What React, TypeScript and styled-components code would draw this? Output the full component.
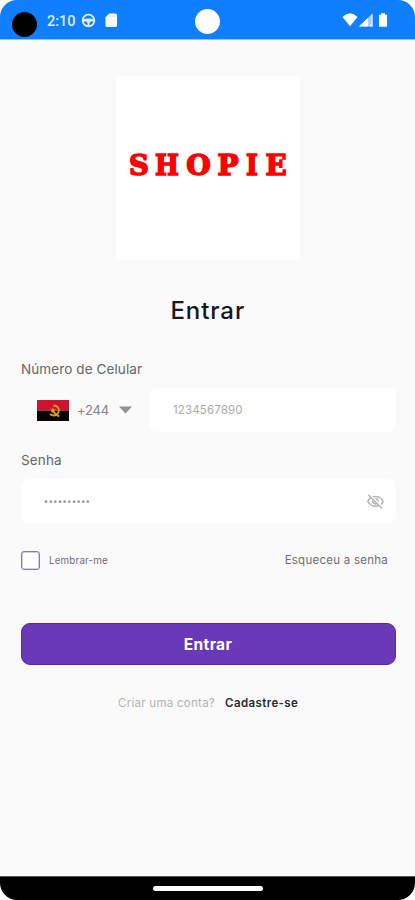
import React from "react";
import styled, { createGlobalStyle } from "styled-components";

const GlobalStyle = createGlobalStyle`
  *, *::before, *::after { box-sizing: border-box; }
  body { margin: 0; background: #fff; font-family: Inter, Roboto, sans-serif; }
  button, input { font-family: inherit; }
`;

const Phone = styled.div`
  width: 415px;
  height: 900px;
  display: flex;
  flex-direction: column;
  overflow: hidden;
  border-radius: 17px;
  background: #fafafa;
`;

const StatusBar = styled.header`
  height: 40px;
  flex: none;
  display: grid;
  grid-template-columns: 1fr 25px 1fr;
  background: #107fff;
  border-bottom: 1px solid #8ec3ff;
`;

const StatusLeft = styled.div`
  display: flex;
  align-items: flex-start;
  padding-left: 12px;
`;

const StatusRight = styled.div`
  display: flex;
  justify-content: flex-end;
  padding: 13px 27px 0 0;
`;

const Dot = styled.span<{ $color: string; $top: number }>`
  flex: none;
  width: 25px;
  height: 25px;
  margin-top: ${(p) => p.$top}px;
  border-radius: 50%;
  background: ${(p) => p.$color};
`;

const Clock = styled.time`
  margin: 12px 6px 0 10px;
  color: #dcecff;
  font-family: Roboto, sans-serif;
  font-size: 14.5px;
  font-weight: 500;
  line-height: 19px;
  width: 28px;
  white-space: nowrap;
`;

const StatusGlyph = styled.svg<{ $left?: number }>`
  flex: none;
  display: block;
  margin: 13px 0 0 ${(p) => p.$left ?? 0}px;
`;

const SignalGlyphs = styled.svg`
  display: block;
`;

const Screen = styled.main`
  flex: 1;
  display: flex;
  flex-direction: column;
  padding: 36px 19px 0 21px;
`;

const LogoCard = styled.div`
  width: 184px;
  height: 184px;
  margin-left: 95px;
  padding: 71px 0 0 12px;
  border-radius: 3px;
  background: #fff;
`;

const Wordmark = styled.div`
  display: grid;
  grid-template-columns: 21px 35px 29px 30px 18px 29px;
  height: 36px;
  color: #fe0000;
  font: bold 28px/38px "DejaVu Serif", "Liberation Serif", serif;
`;

const Letter = styled.span<{ $stretch: number }>`
  justify-self: center;
  width: 0;
  display: flex;
  justify-content: center;
  transform: scaleX(${(p) => p.$stretch});
  -webkit-text-stroke: 1.6px #fe0000;
`;

const Title = styled.h1`
  margin: 35px 0 0 149.5px;
  color: #171719;
  font-size: 24px;
  font-weight: 500;
  line-height: 32px;
  letter-spacing: 0.9px;
`;

const Label = styled.label<{ $top: number; $spacing: number }>`
  margin-top: ${(p) => p.$top}px;
  color: #666;
  font-size: 13.5px;
  line-height: 18px;
  letter-spacing: ${(p) => p.$spacing}px;
`;

const PhoneRow = styled.div`
  display: flex;
  height: 44px;
  margin-top: 10px;
`;

const CountryPicker = styled.button`
  width: 129px;
  display: flex;
  align-items: center;
  padding: 0 0 0 16px;
  border: 0;
  background: transparent;
  color: #858585;
  font-size: 13px;
`;

const Flag = styled.svg`
  flex: none;
  margin-right: 8px;
`;

const Prefix = styled.span`
  width: 42px;
  text-align: left;
  letter-spacing: -0.2px;
`;

const Field = styled.div`
  flex: 1;
  display: flex;
  align-items: center;
  min-width: 0;
  padding: 0 12px 0 23px;
  border-radius: 8px;
  background: #fff;
`;

const PasswordField = styled(Field)`
  flex: none;
  height: 44px;
  margin-top: 10px;
`;

const Input = styled.input<{ $dots?: boolean }>`
  flex: 1;
  min-width: 0;
  padding: ${(p) => (p.$dots ? 1 : 0)}px 0 0;
  border: 0;
  outline: 0;
  background: transparent;
  font-family: ${(p) => (p.$dots ? "Roboto" : "Inter")}, sans-serif;
  font-size: ${(p) => (p.$dots ? 12 : 11.5)}px;
  letter-spacing: ${(p) => (p.$dots ? 0.6 : 0.15)}px;
  &::placeholder { color: ${(p) => (p.$dots ? "#999" : "#aaa")}; opacity: 1; }
`;

const Options = styled.div`
  display: flex;
  align-items: center;
  height: 20px;
  margin-top: 27px;
  padding-right: 8px;
  color: #6d6d6d;
`;

const Checkbox = styled.span`
  width: 19px;
  height: 19px;
  margin-right: 9px;
  border: 1px solid #8874c9;
  box-shadow: inset 0 0 0 0.5px #a99cdb;
  border-radius: 3px;
  background: #fff;
`;

const Remember = styled.span`
  flex: 1;
  font-size: 9.8px;
  letter-spacing: 0.18px;
`;

const Forgot = styled.a`
  font-size: 11.5px;
  letter-spacing: 0.25px;
`;

const Submit = styled.button`
  height: 42px;
  margin: 53px 0 0;
  padding: 1px 1px 0 0;
  border: 1px solid #5a27aa;
  border-radius: 9px;
  background: #6939b7;
  color: #fff;
  font-size: 15.5px;
  font-weight: 700;
  letter-spacing: 0.35px;
`;

const SignUp = styled.p`
  display: flex;
  gap: 10px;
  margin: 29px 0 0 97px;
  color: #b4b4b4;
  font-size: 11.5px;
  line-height: 19px;
  letter-spacing: 0.27px;
  white-space: nowrap;
`;

const SignUpLink = styled.a`
  color: #29292b;
  font-weight: 600;
  letter-spacing: 0.4px;
`;

const NavBar = styled.footer`
  height: 24px;
  flex: none;
  display: flex;
  justify-content: center;
  padding: 9px 0 0 1px;
  border-top: 1px solid #555;
  background: #000;
`;

const HomeHandle = styled.span`
  width: 110px;
  height: 5px;
  border-radius: 2.5px;
  background: #fff;
`;

const letters: [string, number][] = [
  ["S", 0.98], ["H", 0.9], ["O", 1], ["P", 1], ["I", 0.9], ["E", 0.99],
];

export default function App() {
  return (
    <>
      <GlobalStyle />
      <Phone>
        <StatusBar>
          <StatusLeft>
            <Dot $color="#000" $top={12} />
            <Clock>2:10</Clock>
            <StatusGlyph width="15" height="15" viewBox="0 0 15 15">
              <circle cx="7.5" cy="7.5" r="5.8" fill="none" stroke="#e4f0ff" strokeWidth="1.8" />
              <path d="M2 6.7Q7.5 4.4 13 6.7V8.6H9.7L8.5 10V13H6.5V10L5.3 8.6H2Z" fill="#e4f0ff" />
            </StatusGlyph>
            <StatusGlyph $left={9} width="13" height="15" viewBox="0 0 13 15">
              <path d="M4.2.5H10.5Q12 .5 12 2V12.5Q12 14 10.5 14H2Q.5 14 .5 12.5V4.2Z" fill="#f8fbff" />
              <path d="M4.8 2.3V4M7 2.3V4M9.2 2.3V4" stroke="#b7d8ff" />
            </StatusGlyph>
          </StatusLeft>
          <Dot $color="#fff" $top={9} />
          <StatusRight>
            <SignalGlyphs width="46" height="15" viewBox="0 0 46 15">
              <path d="M.5 4Q8 -3.4 15.5 4L8 13.2Z" fill="#fff" />
              <path d="M17 13.4L30.5.5V13.4Z" fill="#a9d0ff" />
              <path d="M17 13.4L26 4.8V13.4ZM28.3 11.5H30.5V13.4H28.3Z" fill="#fff" />
              <path d="M30 1V13" stroke="#deedff" />
              <path d="M39 .3H43V1.8H45V13.7H37V1.8H39Z" fill="#fff" />
            </SignalGlyphs>
          </StatusRight>
        </StatusBar>
        <Screen>
          <LogoCard>
            <Wordmark>
              {letters.map(([letter, stretch]) => (
                <Letter key={letter} $stretch={stretch}>{letter}</Letter>
              ))}
            </Wordmark>
          </LogoCard>
          <Title>Entrar</Title>
          <Label htmlFor="phone" $top={33} $spacing={0.1}>Número de Celular</Label>
          <PhoneRow>
            <CountryPicker>
              <Flag width="32" height="21" viewBox="0 0 32 21">
                <path d="M0 0H32V10.5H0Z" fill="#ce1230" />
                <path d="M0 10.5H32V21H0Z" fill="#080305" />
                <path d="M16.5 5.5C24 5.5 23 15.5 17 15.5Q14.7 15.5 13 14M14.5 10.5L22 16.5" fill="none" stroke="#d9a018" strokeWidth="1.8" />
                <path d="M16 7.5L16.8 9.2L18.7 9.4L17.3 10.7L17.7 12.5L16 11.6L14.3 12.5L14.7 10.7L13.3 9.4L15.2 9.2Z" fill="#d9a018" />
              </Flag>
              <Prefix>+244</Prefix>
              <svg width="13" height="8" viewBox="0 0 13 8">
                <path d="M0 .5H13L6.5 7.5Z" fill="#929292" />
              </svg>
            </CountryPicker>
            <Field><Input id="phone" placeholder="1234567890" /></Field>
          </PhoneRow>
          <Label htmlFor="password" $top={19} $spacing={0.15}>Senha</Label>
          <PasswordField>
            <Input id="password" $dots placeholder="••••••••••" />
            <svg width="17" height="17" viewBox="1 2 22 20">
              <path fill="#b3b3b3" d="M12 6.5a9.8 9.8 0 0 1 8.8 5.5 9.7 9.7 0 0 1-2.4 3.1l1.4 1.4A11.8 11.8 0 0 0 23 12 11.8 11.8 0 0 0 8 5.3l1.7 1.6A10 10 0 0 1 12 6.5Zm-1.1 1.1 2.1 2.1a2.5 2.5 0 0 1 1.3 1.3l2.1 2.1A4.5 4.5 0 0 0 10.9 7.6ZM2 3.9l2.7 2.7A11.8 11.8 0 0 0 1 12a11.8 11.8 0 0 0 15.3 6.3l3.4 3.4 1.4-1.4L3.4 2.5Zm7.5 7.5 2.6 2.6A2.5 2.5 0 0 1 9.5 11.4ZM6.1 8l1.8 1.7A4.5 4.5 0 0 0 13.8 15.7l.9.9A9.8 9.8 0 0 1 3.2 12 9.9 9.9 0 0 1 6.1 8Z" />
            </svg>
          </PasswordField>
          <Options>
            <Checkbox role="checkbox" aria-checked="false" />
            <Remember>Lembrar-me</Remember>
            <Forgot>Esqueceu a senha</Forgot>
          </Options>
          <Submit>Entrar</Submit>
          <SignUp>
            <span>Criar uma conta?</span>
            <SignUpLink>Cadastre-se</SignUpLink>
          </SignUp>
        </Screen>
        <NavBar><HomeHandle /></NavBar>
      </Phone>
    </>
  );
}
